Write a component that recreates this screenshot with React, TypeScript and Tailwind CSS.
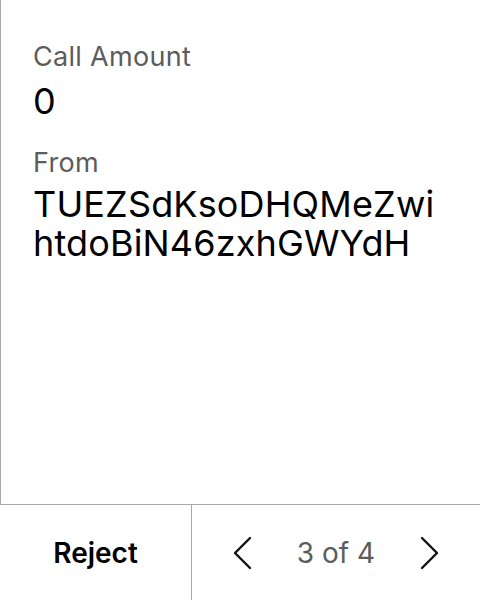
const font = { fontFamily: "Inter, 'Noto Sans', sans-serif" };

function Chevron({ dir }: { dir: "left" | "right" }) {
  return (
    <svg width="20" height="34" viewBox="0 0 20 34" fill="none">
      <path
        d={dir === "left" ? "M17 2 L2 17 L17 32" : "M3 2 L18 17 L3 32"}
        stroke="#111"
        strokeWidth="2.4"
        strokeLinecap="round"
        strokeLinejoin="round"
      />
    </svg>
  );
}

export default function App() {
  return (
    <div className="h-[600px] w-[480px] flex flex-col bg-white text-black" style={font}>
      <div className="flex-1 border-l border-b border-[#a9a9a9] px-8 pt-[39px]">
        <div className="text-[27px] leading-[36px] tracking-[0.3px] text-[#5c5c5c]">Call Amount</div>
        <div className="mt-[5px] text-[36px] leading-[42px]">0</div>
        <div className="mt-[23px] text-[27px] leading-[36px] tracking-[0.3px] text-[#5c5c5c]">From</div>
        <div className="mt-[4px] text-[36px] leading-[39px] tracking-[0.15px] break-all">
          TUEZSdKsoDHQMeZwihtdoBiN46zxhGWYdH
        </div>
      </div>
      <div className="h-[95px] flex">
        <button className="w-[192px] border-r border-[#a9a9a9] flex items-center justify-center text-[28px] font-semibold">
          Reject
        </button>
        <div className="flex-1 flex items-center justify-center gap-[44px]">
          <Chevron dir="left" />
          <span className="text-[28px] text-[#5c5c5c]">3 of 4</span>
          <Chevron dir="right" />
        </div>
      </div>
    </div>
  );
}
